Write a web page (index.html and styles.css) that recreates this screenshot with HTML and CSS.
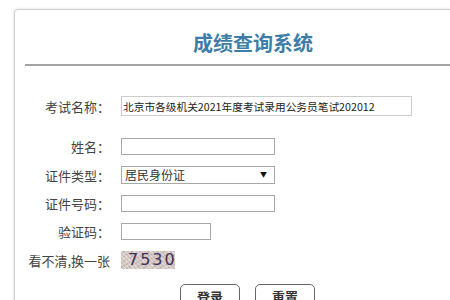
FILE: index.html
```html
<!DOCTYPE html>
<html>
<head>
    <meta charset="utf-8">
    <title>成绩查询系统</title>
    <link rel="stylesheet" href="styles.css">
</head>
<body>
<div class="card">
    <div class="card-header">
        <h1 class="title">成绩查询系统</h1>
    </div>

    <form class="query-form">
        <div class="row row-exam">
            <label class="label">考试名称：</label>
            <input type="text" class="field field-exam" value="北京市各级机关2021年度考试录用公务员笔试202012">
        </div>
        <div class="row">
            <label class="label">姓名：</label>
            <input type="text" class="field">
        </div>
        <div class="row">
            <label class="label">证件类型：</label>
            <div class="select-wrap">
                <select class="field select">
                    <option>居民身份证</option>
                </select>
                <span class="arrow">▼</span>
            </div>
        </div>
        <div class="row">
            <label class="label">证件号码：</label>
            <input type="text" class="field">
        </div>
        <div class="row">
            <label class="label">验证码：</label>
            <input type="text" class="field field-code">
        </div>
        <div class="row row-captcha">
            <label class="label">看不清,换一张</label>
            <span class="captcha">7530</span>
        </div>
        <div class="buttons">
            <button type="submit" class="btn">登录</button>
            <button type="reset" class="btn">重置</button>
        </div>
    </form>
</div>
</body>
</html>
```

FILE: styles.css
```css
html, body {
    overflow: hidden;
}
body {
    margin: 0;
    padding: 0;
    background-color: #ffffff;
    font-family: "Noto Sans CJK SC", "Liberation Sans", sans-serif;
    color: #444;
}
.card {
    width: 476px;
    margin: 9px 0 0 14px;
    border: 1px solid #cfcfcf;
    border-radius: 4px;
    box-shadow: 0 0 3px rgba(0, 0, 0, 0.15);
    background: #fff;
}
.card-header {
    margin: 0 10px;
    padding: 21px 0 9px;
    border-bottom: 2px solid #a3a3a3;
}
.title {
    margin: 0;
    text-align: center;
    font-size: 20px;
    line-height: 24px;
    font-weight: bold;
    color: #3d7ea8;
}
.query-form {
    padding: 30px 0 0;
}
.row {
    display: flex;
    align-items: center;
    margin-bottom: 11px;
}
.row-exam {
    margin-bottom: 22px;
}
.label {
    width: 95px;
    margin-right: 11px;
    text-align: right;
    font-size: 13px;
    line-height: 17px;
    color: #444;
    white-space: nowrap;
}
.field {
    box-sizing: border-box;
    width: 154px;
    height: 17px;
    margin: 0;
    padding: 0 3px;
    border: 1px solid #a8a8a8;
    background: #fff;
    font-family: inherit;
    font-size: 12px;
    color: #333;
    outline: none;
}
.field-exam {
    width: 291px;
    height: 20px;
    padding: 0 1px;
    border-color: #cccccc;
    font-size: 10.7px;
    color: #222;
}
.field-code {
    width: 90px;
}
.select-wrap {
    position: relative;
}
.select {
    display: block;
    appearance: none;
    -webkit-appearance: none;
    height: 18px;
    padding: 0 3px;
    line-height: 16px;
    border-radius: 0;
}
.arrow {
    position: absolute;
    right: 8px;
    top: 4px;
    font-size: 7px;
    line-height: 9px;
    color: #111;
}
.row-captcha {
    margin-bottom: 15px;
}
.captcha {
    display: inline-block;
    width: 54px;
    height: 18px;
    line-height: 18px;
    padding-left: 7px;
    box-sizing: border-box;
    background-color: #d2c7c1;
    background-image: repeating-linear-gradient(45deg, rgba(255, 255, 255, 0.35) 0 1px, transparent 1px 3px),
        repeating-linear-gradient(-30deg, rgba(120, 80, 90, 0.2) 0 1px, transparent 1px 4px);
    font-family: "DejaVu Sans", sans-serif;
    font-size: 16px;
    letter-spacing: 2px;
    color: #3f2f5c;
}
.buttons {
    display: flex;
    gap: 15px;
    padding-left: 165px;
}
.btn {
    width: 60px;
    height: 26px;
    padding: 0;
    border: 1px solid #666;
    border-radius: 5px;
    background: #fff;
    font-family: inherit;
    font-size: 13px;
    font-weight: bold;
    color: #333;
    line-height: 24px;
}
```
